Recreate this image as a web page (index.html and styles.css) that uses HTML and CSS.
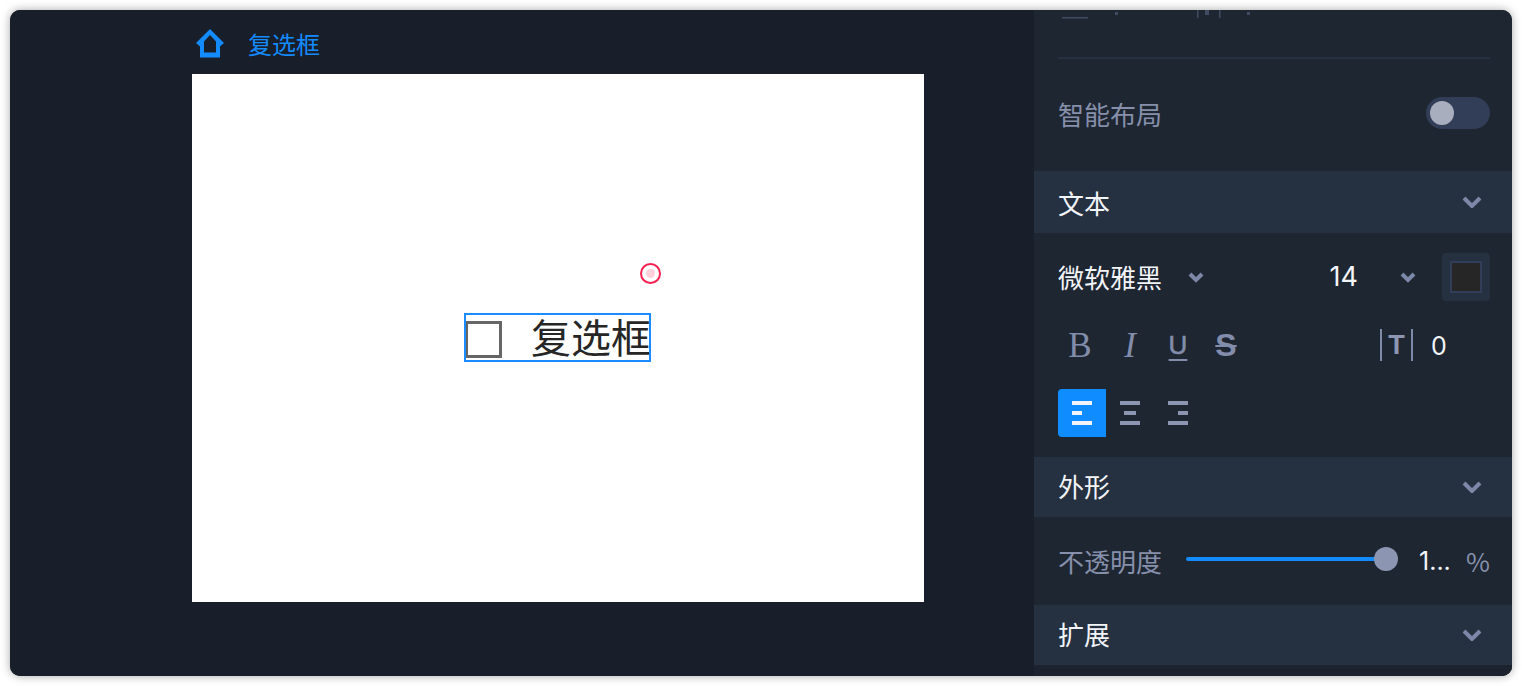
FILE: index.html
```html
<!DOCTYPE html>
<html lang="zh-CN">
<head>
<meta charset="utf-8">
<title>复选框</title>
<link rel="stylesheet" href="styles.css">
</head>
<body>
<div class="window">
  <main class="stage">
    <header class="crumb">
      <svg class="home" viewBox="0 0 28 29"><path fill-rule="evenodd" d="M14 0 28 14 24 17.500V28.500H4V17.500L0 14ZM14 6 8 12.500V23.500H20V12.500Z"/></svg>
      <span class="crumb-title">复选框</span>
    </header>
    <div class="canvas">
      <div class="widget">
        <span class="box"></span>
        <span class="widget-label">复选框</span>
      </div>
      <span class="pointer"><span class="pointer-dot"></span></span>
    </div>
  </main>
  <aside class="panel">
    <div class="layout-block">
      <svg class="clipped" viewBox="0 0 432 10"><g fill="#3f4a63"><rect x="4" y="7" width="26" height="1.500"/><rect x="57" y="2" width="3" height="3"/><rect x="139" y="0" width="1.500" height="8"/><rect x="147" y="0" width="4" height="5"/><rect x="161" y="0" width="1.500" height="8"/><rect x="189" y="2" width="3" height="3"/></g></svg>
      <hr class="rule">
      <div class="row-smart">
        <span class="muted-label">智能布局</span>
        <span class="toggle"><span class="toggle-knob"></span></span>
      </div>
    </div>
    <div class="section-head tall"><span>文本</span><svg class="chev" viewBox="0 0 20 12"><path d="M2 2 10 10 18 2"/></svg></div>
    <div class="text-body">
      <div class="tool-row">
        <span class="value-text">微软雅黑</span>
        <svg class="chev-small first" viewBox="0 0 16 11"><path d="M2 2 8 8 14 2"/></svg>
        <span class="value-text size">14</span>
        <svg class="chev-small second" viewBox="0 0 16 11"><path d="M2 2 8 8 14 2"/></svg>
        <span class="swatch"><span class="swatch-fill"></span></span>
      </div>
      <div class="tool-row">
        <span class="cell glyph-b">B</span>
        <span class="cell glyph-i">I</span>
        <span class="cell glyph-u">U</span>
        <span class="cell glyph-s">S</span>
        <span class="spacing"><span class="spacing-t">T</span></span>
        <span class="value-text zero">0</span>
      </div>
      <div class="tool-row">
        <span class="cell align active"><i class="ln"></i><i class="ln short"></i><i class="ln"></i></span>
        <span class="cell align center"><i class="ln"></i><i class="ln mid"></i><i class="ln"></i></span>
        <span class="cell align right"><i class="ln"></i><i class="ln short"></i><i class="ln"></i></span>
      </div>
    </div>
    <div class="section-head"><span>外形</span><svg class="chev" viewBox="0 0 20 12"><path d="M2 2 10 10 18 2"/></svg></div>
    <div class="opacity-body">
      <span class="muted-label">不透明度</span>
      <span class="slider"><span class="slider-knob"></span></span>
      <span class="value-text pct-value">1...</span>
      <span class="muted-label pct">%</span>
    </div>
    <div class="section-head"><span>扩展</span><svg class="chev" viewBox="0 0 20 12"><path d="M2 2 10 10 18 2"/></svg></div>
    <div class="foot"></div>
  </aside>
</div>
</body>
</html>
```

FILE: styles.css
```css
* { box-sizing: border-box; }

html, body {
  margin: 0;
  height: 100%;
  background: #fff;
  overflow: hidden;
}

body {
  padding: 10px;
  font-family: "Noto Sans CJK SC", "Noto Sans", sans-serif;
  font-size: 26px;
}

.window {
  display: flex;
  width: 1502px;
  height: 666px;
  border-radius: 10px;
  overflow: hidden;
  background: #181f2a;
  box-shadow: 0 0 10px rgba(0, 0, 0, .35);
}

.stage {
  width: 1024px;
  flex: none;
  background: #181f2a;
}

.crumb {
  height: 64px;
  display: flex;
  align-items: center;
  padding-left: 186px;
  color: #138bff;
}

.home {
  width: 28px;
  height: 29px;
  margin-top: 2px;
  fill: #138bff;
}

.crumb-title {
  margin-left: 24px;
  margin-top: 4px;
  font-size: 24px;
  line-height: 32px;
}

.canvas {
  position: relative;
  width: 732px;
  height: 528px;
  margin-left: 182px;
  background: #fff;
}

.widget {
  position: absolute;
  left: 272px;
  top: 239px;
  width: 187px;
  height: 49px;
  border: 2px solid #1a8cff;
  overflow: hidden;
  display: flex;
  align-items: center;
}

.box {
  width: 36px;
  height: 37px;
  flex: none;
  border: 3px solid #666;
  border-left-width: 2px;
  margin-top: 3px;
}

.widget-label {
  margin-left: 29px;
  margin-top: -3px;
  flex: none;
  font-size: 40px;
  line-height: 44px;
  color: #262626;
}

.pointer {
  position: absolute;
  left: 448px;
  top: 189px;
  width: 21px;
  height: 21px;
  border: 2px solid #f5204f;
  border-radius: 50%;
  display: flex;
  align-items: center;
  justify-content: center;
}

.pointer-dot {
  width: 9px;
  height: 9px;
  border-radius: 50%;
  background: #ffd0da;
}

.panel {
  flex: 1;
  display: flex;
  flex-direction: column;
  background: #1e2632;
  color: #f2f4f8;
}

.layout-block {
  height: 161px;
  padding: 0 22px 0 24px;
  display: flex;
  flex-direction: column;
}

.clipped {
  display: block;
  width: 432px;
  height: 10px;
  flex: none;
}

.rule {
  width: 100%;
  height: 2px;
  margin: 37px 0 0;
  border: 0;
  background: #263244;
}

.row-smart {
  display: flex;
  align-items: center;
  justify-content: space-between;
  margin-top: 38px;
  height: 34px;
}

.muted-label {
  color: #8690ab;
  font-size: 26px;
  line-height: 34px;
}

.toggle {
  width: 64px;
  height: 32px;
  margin-top: -2px;
  padding: 4px;
  border-radius: 16px;
  background: #323d57;
  display: block;
}

.toggle-knob {
  display: block;
  width: 24px;
  height: 24px;
  border-radius: 50%;
  background: #a8aebd;
}

.section-head {
  height: 60px;
  flex: none;
  padding: 0 30px 0 24px;
  display: flex;
  align-items: center;
  justify-content: space-between;
  background: #253141;
  font-size: 26px;
  color: #f2f4f8;
}

.section-head span { margin-top: -3px; }

.section-head.tall { height: 62px; }

.section-head.tall span { margin-top: 0; }

.chev {
  width: 20px;
  height: 12px;
  fill: none;
  stroke: #7d88a8;
  stroke-width: 4;
}

.text-body {
  height: 224px;
  flex: none;
  padding: 20px 22px 20px 24px;
  display: flex;
  flex-direction: column;
  gap: 20px;
}

.tool-row {
  height: 48px;
  display: flex;
  align-items: center;
}

.value-text {
  font-size: 26px;
  line-height: 34px;
  color: #f2f4f8;
}

.size {
  margin-left: auto;
  font-family: "Inter", "Noto Sans", sans-serif;
  font-size: 27px;
}

.chev-small {
  width: 16px;
  height: 11px;
  fill: none;
  stroke: #7d88a8;
  stroke-width: 4;
}

.chev-small.first { margin-left: 26px; }
.chev-small.second { margin-left: 42px; }

.swatch {
  width: 48px;
  height: 48px;
  margin-left: 26px;
  padding: 8px;
  border-radius: 4px;
  background: #253141;
}

.swatch-fill {
  display: block;
  width: 32px;
  height: 32px;
  border: 2px solid #323d5a;
  background: #262626;
}

.cell {
  width: 48px;
  height: 48px;
  flex: none;
  display: flex;
  align-items: center;
  justify-content: center;
  color: #828dab;
}

.glyph-b, .glyph-i {
  font-family: "Liberation Serif", serif;
  font-size: 35px;
  padding-top: 2px;
}

.glyph-b { padding-right: 4px; }

.glyph-i { font-style: italic; }

.glyph-u {
  font-family: "Liberation Sans", sans-serif;
  font-size: 26px;
  -webkit-text-stroke: .6px #828dab;
  text-decoration: underline;
  text-decoration-thickness: 2px;
  text-underline-offset: 5px;
}

.glyph-s {
  font-family: "Liberation Sans", sans-serif;
  font-size: 32px;
  font-weight: 700;
  text-decoration: line-through;
  text-decoration-thickness: 2px;
}

.spacing {
  margin-left: auto;
  width: 33px;
  height: 32px;
  border-left: 2px solid #7f8aa8;
  border-right: 2px solid #7f8aa8;
  display: flex;
  align-items: center;
  justify-content: center;
}

.spacing-t {
  font-family: "Liberation Sans", sans-serif;
  font-size: 27px;
  font-weight: 700;
  color: #8c96b3;
  line-height: 32px;
}

.zero {
  width: 77px;
  padding-left: 18px;
  margin-top: 2px;
  font-family: "Inter", "Noto Sans", sans-serif;
  font-size: 25px;
}

.align {
  flex-direction: column;
  align-items: flex-start;
  justify-content: center;
  gap: 6px;
  padding-left: 14px;
}

.align.center { align-items: center; padding-left: 0; }
.align.right { align-items: flex-end; padding: 0 14px 0 0; }

.align.active {
  background: #0f8cff;
  border-radius: 4px 0 0 4px;
}

.ln {
  display: block;
  width: 20px;
  height: 4px;
  background: #8c96b3;
}

.ln.short { width: 10px; }
.ln.mid { width: 12px; }
.active .ln { background: #f2f4f8; }

.opacity-body {
  height: 88px;
  flex: none;
  padding: 0 22px 0 24px;
  display: flex;
  align-items: center;
}

.slider {
  position: relative;
  width: 200px;
  height: 4px;
  margin: -4px 0 0 24px;
  border-radius: 2px;
  background: #138bff;
}

.slider-knob {
  position: absolute;
  right: -12px;
  top: -10px;
  width: 24px;
  height: 24px;
  border-radius: 50%;
  background: #8c96b3;
}

.pct-value {
  margin-left: 33px;
  font-family: "Inter", "Noto Sans", sans-serif;
  font-size: 25px;
}

.pct { margin-left: auto; }

.foot { flex: 1; background: #1c222e; }
```
